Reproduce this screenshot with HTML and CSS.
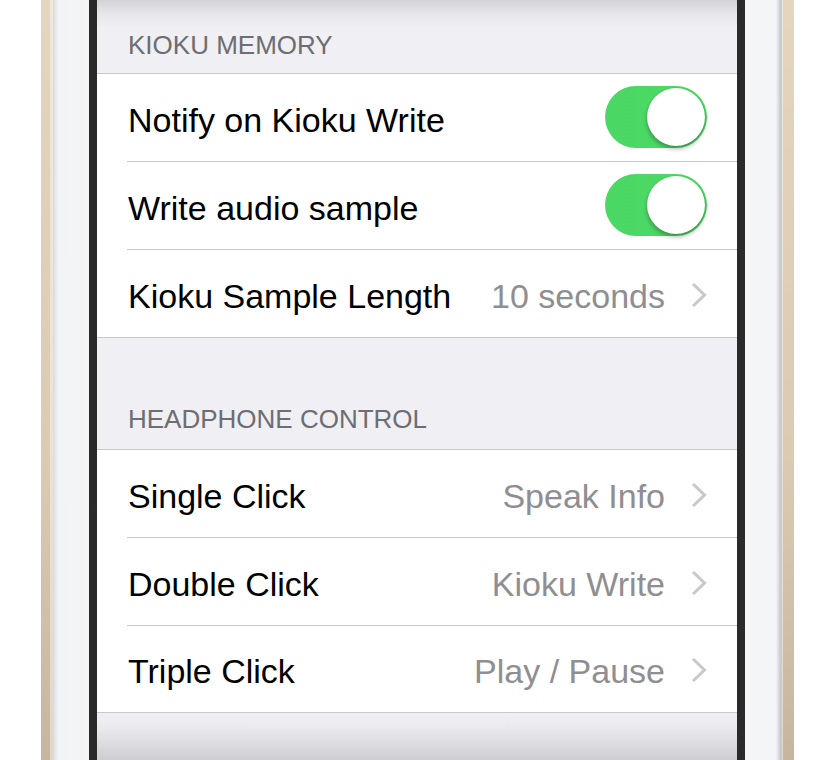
FILE: index.html
```html
<!DOCTYPE html>
<html>
<head>
<meta charset="utf-8">
<link rel="stylesheet" href="styles.css">
</head>
<body>
<div class="device">
  <div class="outside"></div>
  <div class="gold gold-left"></div>
  <div class="silver silver-left"></div>
  <div class="bezel"></div>
  <div class="screen">
    <div class="section-header first">KIOKU MEMORY</div>
    <div class="group">
      <div class="row">
        <span class="label">Notify on Kioku Write</span>
        <span class="switch"><span class="knob"></span></span>
      </div>
      <div class="row">
        <span class="label">Write audio sample</span>
        <span class="switch"><span class="knob"></span></span>
      </div>
      <div class="row">
        <span class="label">Kioku Sample Length</span>
        <span class="value">10 seconds</span>
        <svg class="chev" width="16" height="26" viewBox="0 0 16 26"><path d="M2 2 L13.5 13 L2 24" fill="none" stroke="#c7c7cc" stroke-width="3"/></svg>
      </div>
    </div>
    <div class="section-header second">HEADPHONE CONTROL</div>
    <div class="group">
      <div class="row">
        <span class="label">Single Click</span>
        <span class="value">Speak Info</span>
        <svg class="chev" width="16" height="26" viewBox="0 0 16 26"><path d="M2 2 L13.5 13 L2 24" fill="none" stroke="#c7c7cc" stroke-width="3"/></svg>
      </div>
      <div class="row">
        <span class="label">Double Click</span>
        <span class="value">Kioku Write</span>
        <svg class="chev" width="16" height="26" viewBox="0 0 16 26"><path d="M2 2 L13.5 13 L2 24" fill="none" stroke="#c7c7cc" stroke-width="3"/></svg>
      </div>
      <div class="row last">
        <span class="label">Triple Click</span>
        <span class="value">Play / Pause</span>
        <svg class="chev" width="16" height="26" viewBox="0 0 16 26"><path d="M2 2 L13.5 13 L2 24" fill="none" stroke="#c7c7cc" stroke-width="3"/></svg>
      </div>
    </div>
    <div class="footer"></div>
  </div>
  <div class="bezel"></div>
  <div class="silver silver-right"></div>
  <div class="gold gold-right"></div>
  <div class="outside"></div>
</div>
</body>
</html>
```

FILE: styles.css
```css
* { box-sizing: border-box; }
html, body { margin: 0; padding: 0; background: #fff; }
body {
  width: 830px;
  height: 760px;
  overflow: hidden;
  font-family: "Liberation Sans", Arial, sans-serif;
}
.device {
  display: flex;
  height: 760px;
}
.outside { width: 41px; flex: none; background: #fff; }
.device > .outside:last-child { flex: 1; }
.gold { flex: none; }
.gold-left {
  width: 12px;
  background:
    linear-gradient(to right, transparent 0 9px, rgba(255,255,255,0.45) 9px 12px),
    linear-gradient(to bottom, #e4d5bf 0%, #dccab3 60%, #c8b5a0 100%);
}
.gold-right {
  width: 12px;
  background:
    linear-gradient(to right, rgba(255,255,255,0.45) 0 1px, transparent 1px),
    linear-gradient(to bottom, #e4d5bf 0%, #dccab3 60%, #c8b5a0 100%);
}
.silver { flex: none; }
.silver-left {
  width: 36px;
  background:
    linear-gradient(to right, #d6d9dd 0, #e9ebee 3px, #f2f3f6 6px, #f4f5f7 100%);
}
.silver-right {
  width: 37px;
  background:
    linear-gradient(to right, #f3f5f7 0, #f3f5f7 31px, #dde0e4 33px, #c2c6cb 36px, #cfd2d6 37px);
}
.bezel {
  width: 8px;
  flex: none;
  background: #2a2a2a;
}
.screen {
  width: 640px;
  flex: none;
  display: flex;
  flex-direction: column;
  background:
    linear-gradient(to bottom, #d2d2d7 0, #e6e6eb 14px, #efeff4 28px, #efeff4 100%);
}
.section-header {
  color: #6d6d72;
  font-size: 26px;
  padding-left: 31px;
  border-bottom: 1px solid #c8c7cc;
  display: flex;
  align-items: flex-end;
}
.section-header.first { height: 74px; padding-bottom: 12px; }
.section-header.second { height: 112px; padding-bottom: 14px; }
.group { background: #fff; }
.row {
  height: 88px;
  display: flex;
  align-items: center;
  padding-left: 31px;
  padding-right: 30px;
  position: relative;
}
.row.last { height: 87px; }
.row::after {
  content: "";
  position: absolute;
  left: 30px;
  right: 0;
  bottom: 0;
  height: 1px;
  background: #c8c7cc;
}
.row:last-child::after { left: 0; }
.label {
  flex: 1;
  font-size: 34px;
  color: #000;
  padding-top: 4px;
}
.value {
  font-size: 34px;
  color: #8e8e93;
  padding-top: 4px;
  margin-right: 26px;
}
.chev { flex: none; margin-top: 1px; }
.switch {
  width: 102px;
  height: 62px;
  border-radius: 31px;
  background: linear-gradient(to right, #4bd763, #4cd964);
  position: relative;
  flex: none;
  margin-top: -2px;
}
.knob {
  position: absolute;
  right: 2px;
  top: 2px;
  width: 58px;
  height: 58px;
  border-radius: 50%;
  background: #fff;
  box-shadow: 0 3px 4px rgba(0,0,0,0.3), 0 0 1px rgba(0,0,0,0.2);
}
.footer {
  flex: 1;
  background: linear-gradient(to bottom, #efeff4 0, #ececf0 12px, #cdccd1 48px);
}
```
